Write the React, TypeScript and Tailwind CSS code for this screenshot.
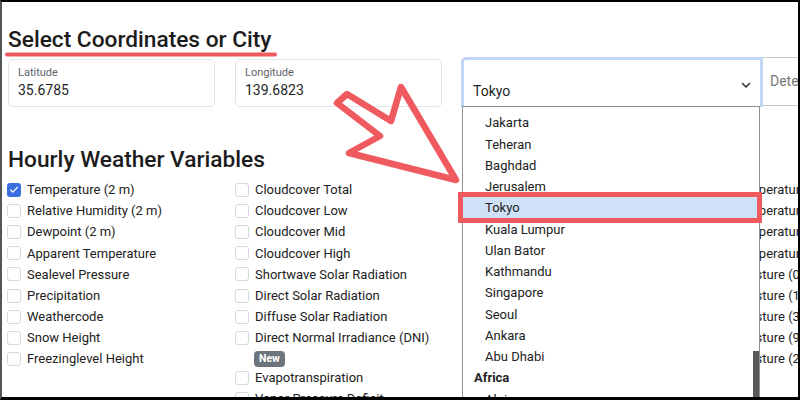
import { Check } from "lucide-react";

const col1 = [
  "Temperature (2 m)",
  "Relative Humidity (2 m)",
  "Dewpoint (2 m)",
  "Apparent Temperature",
  "Sealevel Pressure",
  "Precipitation",
  "Weathercode",
  "Snow Height",
  "Freezinglevel Height",
];

const col2 = [
  "Cloudcover Total",
  "Cloudcover Low",
  "Cloudcover Mid",
  "Cloudcover High",
  "Shortwave Solar Radiation",
  "Direct Solar Radiation",
  "Diffuse Solar Radiation",
  "Direct Normal Irradiance (DNI)",
];

const col3 = [
  "Windspeed (10 m)",
  "Windspeed (80 m)",
  "Windspeed (120 m)",
  "Windspeed (180 m)",
  "Wind Direction (10 m)",
  "Wind Direction (80 m)",
  "Wind Direction (120 m)",
  "Wind Direction (180 m)",
  "Wind Gusts (10 m)",
];

const col4 = [
  "Soil Temperature (0 cm)",
  "Soil Temperature (6 cm)",
  "Soil Temperature (18 cm)",
  "Soil Temperature (54 cm)",
  "Soil Moisture (0-1 cm)",
  "Soil Moisture (1-3 cm)",
  "Soil Moisture (3-9 cm)",
  "Soil Moisture (9-27 cm)",
  "Soil Moisture (27-81 cm)",
];

const cities = [
  "Jakarta",
  "Teheran",
  "Baghdad",
  "Jerusalem",
  "Tokyo",
  "Kuala Lumpur",
  "Ulan Bator",
  "Kathmandu",
  "Singapore",
  "Seoul",
  "Ankara",
  "Abu Dhabi",
];

function CheckItem({ label, checked = false }: { label: string; checked?: boolean }) {
  return (
    <label className="flex h-[21.1px] items-center gap-[6px] whitespace-nowrap">
      {checked ? (
        <span className="flex h-[14px] w-[14px] shrink-0 items-center justify-center rounded-[3px] bg-[#3b6fe0]">
          <Check size={10} strokeWidth={3} className="text-white" />
        </span>
      ) : (
        <span className="h-[14px] w-[14px] shrink-0 rounded-[3px] border border-[#d5d8dc] bg-white" />
      )}
      <span>{label}</span>
    </label>
  );
}

function FloatInput({ label, value }: { label: string; value: string }) {
  return (
    <div className="mt-[2px] h-[48px] rounded-[5px] border border-[#e2e4e7] bg-white pl-[9px] pt-[6px]">
      <div className="text-[11px] leading-[14px] text-[#5f6368]">{label}</div>
      <div className="mt-[1px] text-[14px] leading-[18px] text-[#1f1f1f]">{value}</div>
    </div>
  );
}

export default function App() {
  return (
    <div className="relative h-[400px] w-[800px] overflow-hidden border-b-[3px] border-l-2 border-r-2 border-t-2 border-b-black border-l-[#555] border-r-black border-t-black bg-white font-['Roboto',sans-serif] text-[13px] text-[#222]">
      <div className="pl-[6px]">
        <h2 className="mt-[25px] text-[22.7px] font-medium leading-[26px] text-[#1c1c1c]">
          Select Coordinates or City
        </h2>

        <div className="mt-[4px] grid grid-cols-[207px_207px_207px_207px] gap-x-5">
          <FloatInput label="Latitude" value="35.6785" />
          <FloatInput label="Longitude" value="139.6823" />
          <div className="col-span-2 -ml-[1px] flex h-[50px]">
            <div className="relative h-[50px] w-[302px] shrink-0 rounded-tl-[5px] border-[3px] border-b-0 border-[#c2d6f4] bg-white pl-[9px] pt-[22px]">
              <div className="text-[14px] leading-[18px] text-[#1f1f1f]">Tokyo</div>
              <svg
                className="absolute left-[277px] top-[22px]"
                width="10"
                height="7"
                viewBox="0 0 10 7"
                fill="none"
                stroke="#333"
                strokeWidth="1.6"
                strokeLinecap="round"
                strokeLinejoin="round"
              >
                <path d="M1.5 1.5l3.5 3.5 3.5-3.5" />
              </svg>

              <div className="absolute -left-[2px] top-[46px] h-[300px] w-[298px] border-b border-l-[1.5px] border-r border-t border-[#8f8f8f] bg-white pt-[5.4px] text-[13px] text-[#222]">
                {cities.map((c) => (
                  <div
                    key={c}
                    className={`h-[21.25px] pl-[22px] leading-[21.25px] ${c === "Tokyo" ? "bg-[#cfe1f6]" : ""}`}
                  >
                    {c}
                  </div>
                ))}
                <div className="h-[21.25px] pl-[11px] font-bold leading-[21.25px]">Africa</div>
                <div className="h-[21.25px] pl-[22px] leading-[21.25px]">Algiers</div>
                <div className="absolute right-0 top-[244px] h-[60px] w-[6px] bg-[#595959]" />
              </div>
            </div>
            <div className="flex h-[49px] flex-1 items-center whitespace-nowrap border-b border-t border-[#c9c9c9] bg-white pl-[7px] text-[14px] text-[#777]">
              Detect GPS Position
            </div>
          </div>
        </div>

        <h2 className="mt-[40px] text-[22.7px] font-medium leading-[26px] text-[#1c1c1c]">
          Hourly Weather Variables
        </h2>

        <div className="mt-[6.5px] grid grid-cols-[207px_207px_207px_207px] gap-x-5">
          <div className="-ml-[1px] flex flex-col">
            {col1.map((l, i) => (
              <CheckItem key={l} label={l} checked={i === 0} />
            ))}
          </div>
          <div className="flex flex-col">
            {col2.map((l) => (
              <CheckItem key={l} label={l} />
            ))}
            <div className="mb-[0.5px] mt-[2.5px] flex pl-[19px]">
              <span className="h-[16px] rounded-[4px] bg-[#6c757d] px-[5px] text-[10.5px] font-bold leading-[16px] text-white">
                New
              </span>
            </div>
            <CheckItem label="Evapotranspiration" />
            <CheckItem label="Vapor Pressure Deficit" />
          </div>
          <div className="flex flex-col">
            {col3.map((l) => (
              <CheckItem key={l} label={l} />
            ))}
          </div>
          <div className="flex flex-col">
            {col4.map((l) => (
              <CheckItem key={l} label={l} />
            ))}
          </div>
        </div>
      </div>

      {/* annotations */}
      <svg
        className="pointer-events-none absolute -left-[2px] -top-[2px]"
        width="800"
        height="400"
        viewBox="0 0 800 400"
        fill="none"
        stroke="#ef5a5f"
        strokeLinejoin="round"
        strokeLinecap="round"
      >
        <line x1="7" y1="54.5" x2="275" y2="54.5" strokeWidth="4" />
        <polygon
          points="347,94 391,121 401,87 456,180 349,153 380,136 337,103"
          strokeWidth="6.5"
        />
        <rect x="460.5" y="194.5" width="299" height="26" strokeWidth="5" strokeLinejoin="miter" />
      </svg>
    </div>
  );
}
